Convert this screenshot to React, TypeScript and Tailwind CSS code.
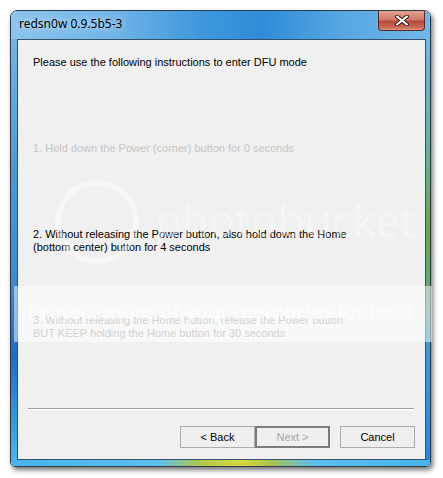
import React from "react";

const btn =
  "w-[75px] h-[22px] flex items-center justify-center text-[11px] leading-none";

export default function App() {
  return (
    <div className="w-[443px] h-[478px] bg-white relative overflow-hidden font-['Liberation_Sans',Arial,sans-serif]">
      <div className="pt-[10px] pl-[10px]">
        <div className="w-[421px] h-[457px] flex flex-col border border-[#2c3a48] rounded-t-[7px] rounded-b-[5px] overflow-hidden shadow-[2px_3px_5px_rgba(0,0,0,0.55)]">
          {/* title bar */}
          <div className="h-[28px] shrink-0 flex items-start justify-between bg-[linear-gradient(to_right,#8cc4ec,#6fb4e6_25%,#3f98dc_45%,#2f8cd8_60%,#58a8e2_80%,#72b6e8)]">
            <div className="pl-[8px] pt-[6px] text-[12px] leading-[14px] text-black [text-shadow:0_0_6px_rgba(255,255,255,0.9)] font-['Noto_Sans',sans-serif]">
              redsn0w 0.9.5b5-3
            </div>
            <div className="mr-[5px] w-[47px] h-[20px] rounded-b-[4px] border border-t-0 border-[#5a2a24] bg-[linear-gradient(to_bottom,#e4a394,#d0786a_45%,#b84a3c_55%,#c86858_85%,#dc9484)] flex items-center justify-center">
              <svg width="14" height="11" viewBox="0 0 14 11">
                <path d="M2 1.5 L12 9.5 M12 1.5 L2 9.5" stroke="#3a2220" strokeWidth="4" strokeLinecap="round" />
                <path d="M2 1.5 L12 9.5 M12 1.5 L2 9.5" stroke="#ffffff" strokeWidth="2" strokeLinecap="round" />
              </svg>
            </div>
          </div>
          {/* middle */}
          <div className="flex flex-1 min-h-0">
            <div className="w-[6px] shrink-0 bg-[linear-gradient(to_bottom,#72b4e6,#4a9ad8_30%,#3b8ed6_55%,#1e6cc6_75%,#3aa6e6_95%,#4ab6ee)]" />
            <div className="w-[409px] shrink-0 border border-[#33506c] bg-[#f0f0f0] flex flex-col text-[11px] leading-[13px]">
              <div className="pl-[15px] pt-[16px] text-black">
                Please use the following instructions to enter DFU mode
              </div>
              <div className="pl-[15px] mt-[73px] text-[#c4c4c4]">
                1. Hold down the Power (corner) button for 0 seconds
              </div>
              <div className="pl-[15px] mt-[73px] text-black">
                <div>2. Without releasing the Power button, also hold down the Home</div>
                <div>(bottom center) button for 4 seconds</div>
              </div>
              <div className="pl-[15px] mt-[60px] text-[#a4a4a4]">
                <div>3. Without releasing the Home button, release the Power button</div>
                <div>BUT KEEP holding the Home button for 30 seconds</div>
              </div>
              <div className="mt-[68px] ml-[10px] mr-[11px] h-px bg-[#a0a0a0] border-b border-white box-content" />
              <div className="mt-[16px] mr-[10px] flex justify-end">
                <div className={`${btn} border border-[#acacac] bg-[#efefef] text-black`}>&lt; Back</div>
                <div className={`${btn} border-2 border-[#7c7c7c] bg-[#efefef] text-[#a6a6a6]`}>Next &gt;</div>
                <div className={`${btn} ml-[10px] border border-[#acacac] bg-[#efefef] text-black`}>Cancel</div>
              </div>
            </div>
            <div className="w-[4px] shrink-0 bg-[linear-gradient(to_bottom,#74b6e6,#6cae9c_25%,#68a84c_45%,#62ac70_60%,#3c98dc_75%,#2a86da)]" />
          </div>
          <div className="h-[6px] shrink-0 bg-[linear-gradient(to_right,#48b4ec,#5cc0ee_35%,#b0c850_45%,#d8d840_55%,#a8c44c_62%,#5cc0ee_72%,#48b4ec)]" />
        </div>
      </div>

      {/* photobucket watermark overlay */}
      <div className="absolute left-[55px] top-[180px] w-[84px] h-[84px] rounded-full border-[6px] border-white/40 pointer-events-none" />
      <div className="absolute left-[155px] top-[195px] text-[44px] leading-[50px] text-white/40 font-['Open_Sans',sans-serif] pointer-events-none">
        photobucket
      </div>
      <div className="absolute left-[14px] top-[286px] w-[418px] h-[56px] bg-white/50 pointer-events-none" />
      <div className="absolute left-[28px] top-[298px] text-[20px] leading-[28px] text-white/70 font-['Open_Sans',sans-serif] font-semibold whitespace-nowrap pointer-events-none">
        Protect more of your memories for less!
      </div>
    </div>
  );
}
